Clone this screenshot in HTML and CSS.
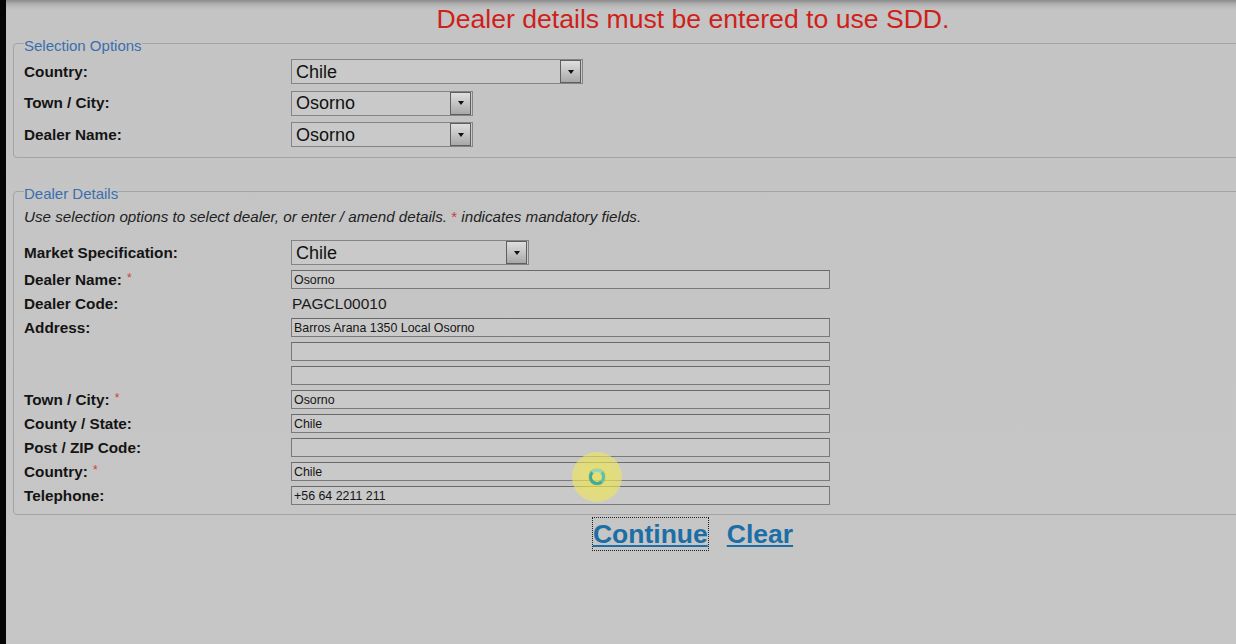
FILE: index.html
```html
<!DOCTYPE html>
<html lang="en">
<head>
<meta charset="utf-8">
<title>Dealer details</title>
<link rel="stylesheet" href="styles.css">
</head>
<body>
<div class="screen">
  <div class="strip"></div>
  <main class="page">
    <h1 class="notice">Dealer details must be entered to use SDD.</h1>

    <fieldset class="group group-selection">
      <legend>Selection Options</legend>
      <div class="form-grid grid-selection">
        <span class="lbl">Country:</span>
        <div class="select select-country"><span class="val">Chile</span><span class="arrow"></span></div>
        <span class="lbl">Town / City:</span>
        <div class="select select-short"><span class="val">Osorno</span><span class="arrow"></span></div>
        <span class="lbl">Dealer Name:</span>
        <div class="select select-short"><span class="val">Osorno</span><span class="arrow"></span></div>
      </div>
    </fieldset>

    <fieldset class="group group-details">
      <legend>Dealer Details</legend>
      <p class="hint">Use selection options to select dealer, or enter / amend details. <span class="req-hint">*</span> indicates mandatory fields.</p>
      <div class="form-grid grid-details">
        <span class="lbl">Market Specification:</span>
        <div class="select select-market"><span class="val">Chile</span><span class="arrow"></span></div>

        <span class="lbl">Dealer Name: <span class="req">*</span></span>
        <input class="field" type="text" value="Osorno">

        <span class="lbl">Dealer Code:</span>
        <span class="code">PAGCL00010</span>

        <span class="lbl">Address:</span>
        <input class="field" type="text" value="Barros Arana 1350 Local Osorno">
        <span class="lbl"></span>
        <input class="field" type="text" value="">
        <span class="lbl"></span>
        <input class="field" type="text" value="">

        <span class="lbl">Town / City: <span class="req">*</span></span>
        <input class="field" type="text" value="Osorno">

        <span class="lbl">County / State:</span>
        <input class="field" type="text" value="Chile">

        <span class="lbl">Post / ZIP Code:</span>
        <input class="field" type="text" value="">

        <span class="lbl">Country: <span class="req">*</span></span>
        <input class="field" type="text" value="Chile">

        <span class="lbl">Telephone:</span>
        <input class="field" type="text" value="+56 64 2211 211">
      </div>
    </fieldset>

    <div class="actions">
      <a class="link link-focus" href="#">Continue</a>
      <a class="link" href="#">Clear</a>
    </div>
  </main>
  <div class="cursor"><span class="spinner"></span></div>
</div>
</body>
</html>
```

FILE: styles.css
```css
html, body {
  margin: 0;
  padding: 0;
  overflow: hidden;
  width: 1236px;
  height: 644px;
}

body {
  background: linear-gradient(to bottom, #8a8a8a 0px, #b0b0b0 4px, #c4c4c4 10px, #c6c6c6 100%);
  font-family: "Liberation Sans", Arial, sans-serif;
  color: #141414;
}

.screen {
  position: relative;
  display: flex;
  height: 644px;
}

.strip {
  flex: 0 0 6px;
  background: #050505;
}

.page {
  flex: 0 0 1360px;
  padding-left: 7px;
}

.notice {
  margin: 0;
  padding-top: 7px;
  font-size: 26.6px;
  line-height: 25px;
  font-weight: normal;
  color: #cf1f1a;
  text-align: center;
}

.group {
  margin: 0;
  border: 1px solid #a4a4a4;
  border-radius: 4px;
  padding: 5px 10px 10px 10px;
}

.group legend {
  padding: 6px 0 0 0;
  font-size: 15px;
  line-height: 16px;
  color: #3a6fae;
}

.group-details {
  margin-top: 22px;
  padding-top: 7px;
  padding-bottom: 9px;
}

.form-grid {
  display: grid;
  grid-template-columns: 267px 1fr;
  align-items: center;
  justify-items: start;
}

.grid-selection {
  grid-auto-rows: 25px;
  row-gap: 6.5px;
}

.grid-details {
  row-gap: 5px;
}

.lbl {
  font-size: 15.3px;
  font-weight: bold;
  color: #141414;
  white-space: nowrap;
}

.req {
  color: #d23a36;
  font-weight: normal;
  font-size: 12px;
  vertical-align: top;
  margin-left: 1px;
}

.req-hint {
  color: #d23a36;
  font-style: normal;
}

.hint {
  margin: 0 0 15px 0;
  font-size: 15.2px;
  line-height: 16px;
  font-style: italic;
  color: #1e1e1e;
}

.select {
  display: flex;
  align-items: center;
  box-sizing: border-box;
  height: 25px;
  border: 1px solid #848484;
  background: #c9c9c9;
  font-size: 18px;
  color: #111;
  padding-left: 4px;
  padding-top: 1px;
}

.select .val {
  flex: 1;
}

.select .arrow {
  display: flex;
  align-items: center;
  justify-content: center;
  box-sizing: border-box;
  width: 21px;
  height: 23px;
  margin-top: -1px;
  margin-right: 1px;
  border: 1px solid #5f5f5f;
  background: linear-gradient(to bottom, #dedede 0%, #c4c4c4 50%, #a8a8a8 100%);
}

.select .arrow::after {
  content: "";
  width: 0;
  height: 0;
  border-left: 3.5px solid transparent;
  border-right: 3.5px solid transparent;
  border-top: 4px solid #111;
}

.select-country { width: 292px; }
.select-short { width: 182px; }
.select-market { width: 238px; }

.field {
  box-sizing: border-box;
  width: 539px;
  height: 19px;
  margin: 0;
  border: 1px solid #7a7a7a;
  border-top-color: #6a6a6a;
  background: #c9c9c9;
  font-family: "Liberation Sans", Arial, sans-serif;
  font-size: 12.4px;
  color: #151515;
  padding: 0 2px;
  outline: none;
}

.code {
  display: flex;
  align-items: center;
  height: 19px;
  padding-left: 1px;
  font-size: 15.5px;
  color: #1a1a1a;
}

.actions {
  display: flex;
  justify-content: center;
  gap: 19px;
  margin-top: 3px;
}

.link {
  font-size: 26.5px;
  line-height: 32px;
  font-weight: bold;
  color: #1b6ea6;
  text-decoration: underline;
  text-decoration-thickness: 2px;
  text-underline-offset: 2px;
}

.link-focus {
  outline: 1px dotted #222;
  outline-offset: 0;
}

.cursor {
  position: absolute;
  left: 572px;
  top: 452px;
  width: 50px;
  height: 50px;
  border-radius: 50%;
  background: radial-gradient(circle, rgba(240, 232, 80, 0.75) 0%, rgba(238, 230, 90, 0.6) 70%, rgba(235, 228, 100, 0) 100%);
  display: flex;
  align-items: center;
  justify-content: center;
}

.spinner {
  width: 10px;
  height: 10px;
  border-radius: 50%;
  border: 3px solid #3fa99a;
  border-top-color: #8fd8c8;
  border-right-color: #5cc0b0;
  box-shadow: 0 0 1px #2a6a70;
}
```
